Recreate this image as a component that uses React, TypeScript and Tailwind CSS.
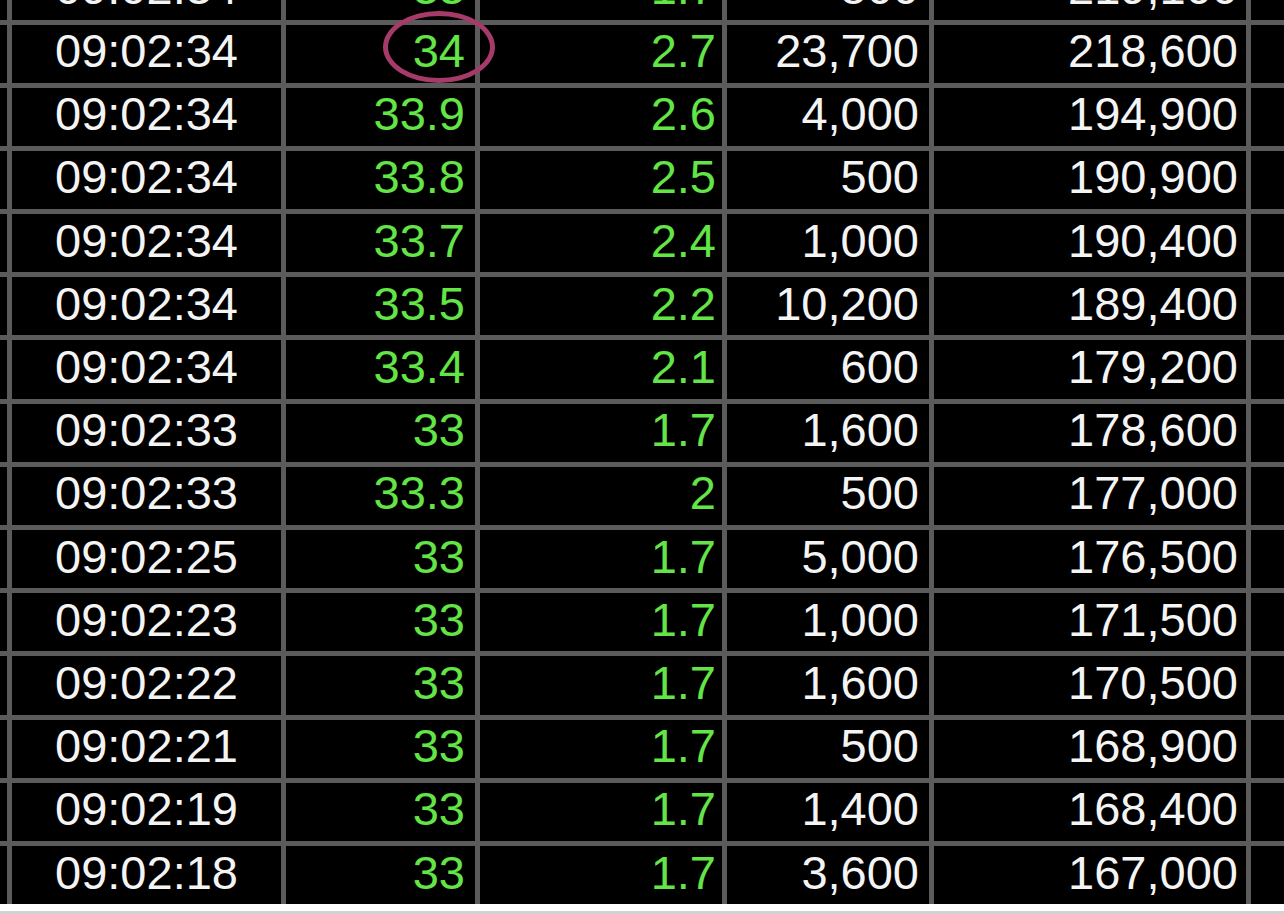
import React from "react";

type Row = [string, string, string, string, string];

const rows: Row[] = [
  ["09:02:34", "33", "1.7", "500", "219,100"],
  ["09:02:34", "34", "2.7", "23,700", "218,600"],
  ["09:02:34", "33.9", "2.6", "4,000", "194,900"],
  ["09:02:34", "33.8", "2.5", "500", "190,900"],
  ["09:02:34", "33.7", "2.4", "1,000", "190,400"],
  ["09:02:34", "33.5", "2.2", "10,200", "189,400"],
  ["09:02:34", "33.4", "2.1", "600", "179,200"],
  ["09:02:33", "33", "1.7", "1,600", "178,600"],
  ["09:02:33", "33.3", "2", "500", "177,000"],
  ["09:02:25", "33", "1.7", "5,000", "176,500"],
  ["09:02:23", "33", "1.7", "1,000", "171,500"],
  ["09:02:22", "33", "1.7", "1,600", "170,500"],
  ["09:02:21", "33", "1.7", "500", "168,900"],
  ["09:02:19", "33", "1.7", "1,400", "168,400"],
  ["09:02:18", "33", "1.7", "3,600", "167,000"],
];

const cell = "bg-black h-[58.2px] flex items-center pb-[6px] leading-none";

export default function App() {
  return (
    <div
      className="relative w-[1284px] h-[914px] overflow-hidden bg-white flex flex-col"
      style={{ fontFamily: '"Liberation Sans", Arial, sans-serif' }}
    >
      <div className="mt-[-38.7px] grid grid-cols-[7px_269px_189px_242px_202px_312px_1fr] gap-[5px] bg-[#5b5b5b] text-[47px]">
        {rows.map((r, i) => (
          <React.Fragment key={i}>
            <div className={cell} />
            <div className={`${cell} justify-center text-[#f4f4f4]`}>{r[0]}</div>
            <div className={`${cell} justify-end pr-[10px] text-[#63e447]`}>{r[1]}</div>
            <div className={`${cell} justify-end pr-[6px] text-[#63e447]`}>{r[2]}</div>
            <div className={`${cell} justify-end pr-[10px] text-[#f4f4f4]`}>{r[3]}</div>
            <div className={`${cell} justify-end pr-[8px] text-[#f4f4f4]`}>{r[4]}</div>
            <div className={cell} />
          </React.Fragment>
        ))}
      </div>
      <div className="h-[7px] bg-white shrink-0" />
      <div className="h-[3px] bg-[#d2d2d2] shrink-0" />
      <div className="absolute left-[383px] top-[11px] w-[112px] h-[72px] rounded-[50%] border-[5px] border-[#a63a68]" />
    </div>
  );
}
